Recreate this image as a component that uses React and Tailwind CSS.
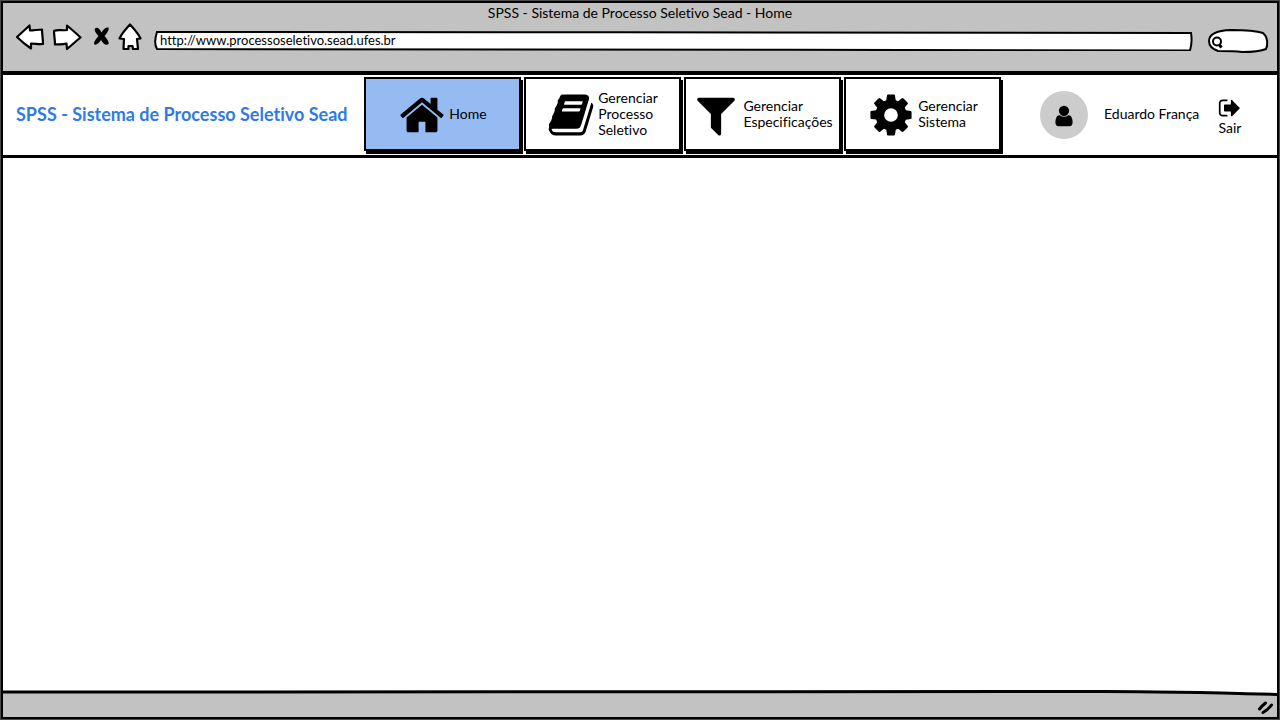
import React from 'react';

const ICONS = {
  home: 'M1472 992v480q0 26-19 45t-45 19h-384v-384h-256v384h-384q-26 0-45-19t-19-45v-480q0-1 .5-3t.5-3l575-474 575 474q1 2 1 6zm223-69l-62 74q-8 9-21 11h-3q-13 0-21-7l-692-577-692 577q-12 8-24 7-13-2-21-11l-62-74q-8-10-7-23.5t11-21.5l719-599q32-26 76-26t76 26l244 204v-195q0-14 9-23t23-9h192q14 0 23 9t9 23v408l219 182q10 8 11 21.5t-7 23.5z',
  book: 'M1703 478q40 57 18 129l-275 906q-19 64-76.5 107.5t-122.5 43.5h-923q-77 0-148.5-53.5t-99.5-131.5q-24-67-2-127 0-4 3-27t4-37q1-8-3-21.5t-3-19.5q2-11 8-21t16.5-23.5 16.5-23.5q23-38 45-91.5t30-91.5q3-10 .5-30t-.5-28q3-11 17-28t17-23q21-36 42-92t25-90q1-9-2.5-32t.5-28q4-13 22-30.5t22-22.5q19-26 42.5-84.5t27.5-96.5q1-8-3-25.5t-2-26.5q2-8 9-18t18-23 17-21q8-12 16.5-30.5t15-35 16-36 19.5-32 26.5-23.5 36-11.5 47.5 5.5l-1 3q38-9 51-9h761q74 0 114 56t18 130l-274 906q-36 119-71.5 153.5t-128.5 34.5h-869q-27 0-38 15-11 16-1 43 24 70 144 70h923q29 0 56-15.5t35-41.5l300-987q7-22 5-57 38 15 59 43zm-1064 2q-4 13 2 22.5t20 9.5h608q13 0 25.5-9.5t16.5-22.5l21-64q4-13-2-22.5t-20-9.5h-608q-13 0-25.5 9.5t-16.5 22.5zm-83 256q-4 13 2 22.5t20 9.5h608q13 0 25.5-9.5t16.5-22.5l21-64q4-13-2-22.5t-20-9.5h-608q-13 0-25.5 9.5t-16.5 22.5z',
  filter: 'M1595 295q17 41-14 70l-493 493v742q0 42-39 59-13 5-25 5-27 0-45-19l-256-256q-19-19-19-45v-486l-493-493q-31-29-14-70 17-39 59-39h1280q42 0 59 39z',
  cog: 'M1152 896q0-106-75-181t-181-75-181 75-75 181 75 181 181 75 181-75 75-181zm512-109v222q0 12-8 23t-20 13l-185 28q-19 54-39 91 35 50 107 138 10 12 10 25t-9 23q-27 37-99 108t-94 71q-12 0-26-9l-138-108q-44 23-91 38-16 136-29 186-7 28-36 28h-222q-14 0-24.5-8.5t-11.5-21.5l-28-184q-49-16-90-37l-141 107q-10 9-25 9-14 0-25-11-126-114-165-168-7-10-7-23 0-12 8-23 15-21 51-66.5t54-70.5q-27-50-41-99l-183-27q-13-2-21-12.5t-8-23.5v-222q0-12 8-23t19-13l186-28q14-46 39-92-40-57-107-138-10-12-10-24 0-10 9-23 26-36 98.5-107.5t94.5-71.5q13 0 26 10l138 107q44-23 91-38 16-136 29-186 7-28 36-28h222q14 0 24.5 8.5t11.5 21.5l28 184q49 16 90 37l142-107q9-9 24-9 13 0 25 10 129 119 165 170 7 8 7 22 0 12-8 23-15 21-51 66.5t-54 70.5q26 50 41 98l183 28q13 2 21 12.5t8 23.5z',
  user: 'M1536 1399q0 109-62.5 187t-150.5 78h-854q-88 0-150.5-78t-62.5-187q0-85 8.5-160.5t31.5-152 58.5-131 94-89 134.5-34.5q131 128 313 128t313-128q76 0 134.5 34.5t94 89 58.5 131 31.5 152 8.5 160.5zm-256-887q0 159-112.5 271.5t-271.5 112.5-271.5-112.5-112.5-271.5 112.5-271.5 271.5-112.5 271.5 112.5 112.5 271.5z',
  signOut: 'M704 1440q0 4 1 20t.5 26.5-3 23.5-10 19.5-20.5 6.5h-320q-119 0-203.5-84.5t-84.5-203.5v-704q0-119 84.5-203.5t203.5-84.5h320q13 0 22.5 9.5t9.5 22.5q0 4 1 20t.5 26.5-3 23.5-10 19.5-20.5 6.5h-320q-66 0-113 47t-47 113v704q0 66 47 113t113 47h312l11.5 1 11.5 3 8 5.5 7 9 2 13.5zm928-544q0 26-19 45l-544 544q-19 19-45 19t-45-19-19-45v-288h-448q-26 0-45-19t-19-45v-384q0-26 19-45t45-19h448v-288q0-26 19-45t45-19 45 19 19 45l544 544q19 19 19 45z',
};

function Icon({ name, className }) {
  return (
    <svg viewBox="0 0 1792 1792" className={className} fill="currentColor" aria-hidden="true">
      <path d={ICONS[name]} />
    </svg>
  );
}

const MENU = [
  { icon: 'home', lines: ['Home'], active: true },
  { icon: 'book', lines: ['Gerenciar', 'Processo', 'Seletivo'] },
  { icon: 'filter', lines: ['Gerenciar', 'Especificações'] },
  { icon: 'cog', lines: ['Gerenciar', 'Sistema'] },
];

function ToolButton({ label, className, viewBox, children }) {
  return (
    <button type="button" aria-label={label} className="shrink-0">
      <svg
        viewBox={viewBox}
        className={className}
        fill="#fff"
        stroke="#000"
        strokeWidth="2.2"
        strokeLinejoin="round"
        strokeLinecap="round"
      >
        {children}
      </svg>
    </button>
  );
}

function BrowserBar() {
  return (
    <header className="bg-[#c2c2c2] border-b-4 border-black h-[72px] shrink-0">
      <p className="h-5 text-center leading-5">SPSS - Sistema de Processo Seletivo Sead - Home</p>
      <div className="flex items-start gap-1 pl-[11px] pr-2">
        <ToolButton label="Voltar" viewBox="0 0 32 28" className="block w-8 h-7">
          <path d="M3 14 15.500 2.500 16 7.500C20 7.500 24 6.500 28 6.500 28 11 29 16 29 21 25 21.500 21 20.500 17 20.500L17 25.500C12 22 7 18 3 14Z" />
        </ToolButton>
        <ToolButton label="Avançar" viewBox="0 0 32 28" className="block w-8 h-7">
          <path d="M4 8C8 6 12 8 17 7L17 2.500C21 6 26 10 30.500 14.500 26 18 22 22 17 26L16.500 20.500C12 22 8 21 5 21.500 5 17 4 12 4 8Z" />
        </ToolButton>
        <ToolButton label="Parar" viewBox="0 0 28 28" className="block w-7 h-7">
          <path
            d="M9 5.500C11 4 13 5 15.500 9.500 17.500 6 20 4 22.500 4.500 23.500 7 21 10 18.500 13 21 16 23.500 19 22.500 21 20 23 17.500 21 15 17 13 20 10.500 22.500 8.500 21.500 7 19.500 10 16 12.500 13 10 10.500 8 7.500 9 5.500Z"
            fill="#000"
            stroke="none"
          />
        </ToolButton>
        <ToolButton label="Página inicial" viewBox="0 0 24 28" className="block w-6 h-7">
          <path d="M12 1.500C15 5 20 10 22.500 15.500L19 16 20 26 15 26 14.500 23 10.500 23 10.500 26 5.500 26 6 16 1.500 15.500C4 10 8 6 12 1.500Z" />
        </ToolButton>
        <div className="relative ml-2 flex-1 mt-2">
          <svg viewBox="0 0 1040 20" preserveAspectRatio="none" className="absolute inset-0 w-full h-full" fill="#fff" stroke="#000" strokeWidth="2" aria-hidden="true">
            <path d="M3 1C300 0.500 800 2 1038 2 1039 8 1039 13 1037 19.500 700 18.500 300 19 3 18 0 13 1 7 3 1Z" />
          </svg>
          <input
            type="text"
            aria-label="Endereço"
            defaultValue="http://www.processoseletivo.sead.ufes.br"
            className="relative block w-full h-5 px-1.5 pb-0.5 text-[13px] bg-transparent outline-none"
          />
        </div>
        <div className="relative ml-2.5 w-[62px] h-6 mt-1.5">
          <svg viewBox="0 0 62 24" className="absolute inset-0 w-full h-full" fill="#fff" stroke="#000" strokeWidth="2" aria-hidden="true">
            <path d="M2 12C2 5 10 1.500 24 1 38 1 50 2 56 4 61 8 61 16 59 20 52 23 45 23 35 23 28 22 18 22 11 22 5 20 2 17 2 12Z" />
            <circle cx="10" cy="12.500" r="4" />
            <path d="M12.500 16 14.500 18.500" strokeWidth="3" />
          </svg>
          <input type="search" aria-label="Pesquisar" className="relative block w-full h-full pl-5 pr-2 bg-transparent outline-none" />
        </div>
      </div>
    </header>
  );
}

function MenuButton({ icon, lines, active }) {
  return (
    <button
      type="button"
      aria-current={active ? 'page' : undefined}
      className={
        'flex w-[157px] items-center justify-center gap-[3px] border-2 border-black text-left leading-4 shadow-[2px_3px_0_0_#000] ' +
        (active ? 'bg-[#95bbf2]' : 'bg-white')
      }
    >
      <Icon name={icon} className="mt-0.5 size-12 shrink-0" />
      <span>
        {lines.map((line) => (
          <span key={line} className="block">{line}</span>
        ))}
      </span>
    </button>
  );
}

export default function App() {
  return (
    <div className="flex min-h-screen flex-col bg-[#4a4a4a] p-px font-['Lato','Liberation_Sans',sans-serif] text-[14px] text-black [font-variant-ligatures:none]">
      <div className="flex flex-1 flex-col border-2 border-black bg-white">
        <BrowserBar />
        <div className="flex h-[83px] shrink-0 items-center justify-between border-b-3 border-black pl-[13px] pr-[35px]">
          <h1 className="flex-1 whitespace-nowrap pb-0.5 text-[18px] font-bold text-[#2f7ae5]">
            SPSS - Sistema de Processo Seletivo Sead
          </h1>
          <nav className="flex gap-[3px] self-stretch pt-0.5 pb-1" aria-label="Menu principal">
            {MENU.map((item) => (
              <MenuButton key={item.icon} {...item} />
            ))}
          </nav>
          <div className="ml-[39px] flex items-center gap-4">
            <span className="flex size-12 items-center justify-center rounded-full bg-[#ccc]">
              <Icon name="user" className="mt-0.5 size-6" />
            </span>
            <span className="w-[98px] whitespace-nowrap pb-1">Eduardo França</span>
            <button type="button" className="flex flex-col pt-0.5 leading-4">
              <Icon name="signOut" className="size-6" />
              <span>Sair</span>
            </button>
          </div>
        </div>
        <main className="flex-1" />
        <footer className="relative flex h-[27px] shrink-0 items-end justify-end bg-[#c2c2c2]">
          <svg viewBox="0 0 1274 6" preserveAspectRatio="none" className="absolute inset-x-0 top-0 h-1.5 w-full" aria-hidden="true">
            <path d="M0 0H1274V4C1200 2 1150 1.500 1100 1.500H0Z" fill="#fff" />
            <path d="M0 2C300 3 700 1 1100 1.500 1160 1.500 1220 3 1274 4.500" fill="none" stroke="#000" strokeWidth="3" />
          </svg>
          <svg viewBox="0 0 18 16" className="mr-0.5 h-4 w-[18px]" fill="none" stroke="#000" strokeWidth="3" strokeLinecap="round" aria-hidden="true">
            <path d="M2.500 8C4 6 6 4 8.500 2M6 11.500C9 10 12 7.500 14.500 4" />
          </svg>
        </footer>
      </div>
    </div>
  );
}
